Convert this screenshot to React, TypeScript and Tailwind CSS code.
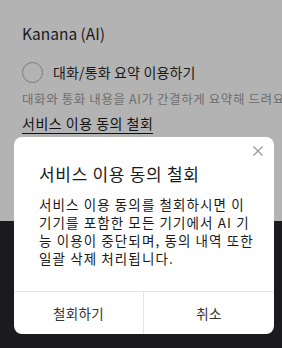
export default function App() {
  return (
    <div
      className="relative w-[282px] h-[348px] overflow-hidden bg-[#1b1b1d]"
      style={{ fontFamily: '"Noto Sans CJK KR", "Noto Sans", sans-serif' }}
    >
      {/* dimmed settings page */}
      <div className="h-[221px] bg-[#b3b3b3] px-[22px] pt-[22px]">
        <h2 className="text-[15.5px] leading-[22px] text-[#1a1a1a]">Kanana (AI)</h2>
        <div className="mt-[18px] flex items-center gap-[10px]">
          <div className="w-[21px] h-[21px] rounded-full border border-[#7a7a7a]" />
          <span className="text-[14px] tracking-[0.15px] text-[#1a1a1a]">대화/통화 요약 이용하기</span>
        </div>
        <p className="mt-[7px] whitespace-nowrap text-[12.5px] tracking-[0.6px] text-[#6e6e6e]">
          대화와 통화 내용을 AI가 간결하게 요약해 드려요
        </p>
        <span className="mt-[4px] inline-block border-b border-[#111] text-[14px] leading-[20px] tracking-[0.5px] text-[#111]">
          서비스 이용 동의 철회
        </span>
      </div>

      {/* confirm dialog */}
      <div className="absolute left-[14px] top-[137px] w-[260px] h-[197px] rounded-[8px] bg-white flex flex-col">
        <button className="absolute right-[10px] top-[8px] text-[#9a9a9a]">
          <svg width="12" height="12" viewBox="0 0 12 12" stroke="currentColor" strokeWidth="1.3">
            <path d="M1.5 1.5l9 9M10.5 1.5l-9 9" />
          </svg>
        </button>
        <div className="flex-1 pl-[25px] pr-[18px] pt-[25px]">
          <h3 className="text-[17px] leading-[24px] tracking-[0.7px] text-[#1a1a1a]">서비스 이용 동의 철회</h3>
          <p className="mt-[9px] text-[13.5px] leading-[18px] tracking-[1.1px] text-[#1a1a1a]">
            서비스 이용 동의를 철회하시면 이 기기를 포함한 모든 기기에서 AI 기능 이용이 중단되며, 동의 내역 또한 일괄 삭제 처리됩니다.
          </p>
        </div>
        <div className="h-[43px] border-t border-[#e5e5e5] grid grid-cols-2 text-[13.5px] tracking-[0.3px] text-[#333]">
          <button className="border-r border-[#e5e5e5]">철회하기</button>
          <button>취소</button>
        </div>
      </div>
    </div>
  );
}
